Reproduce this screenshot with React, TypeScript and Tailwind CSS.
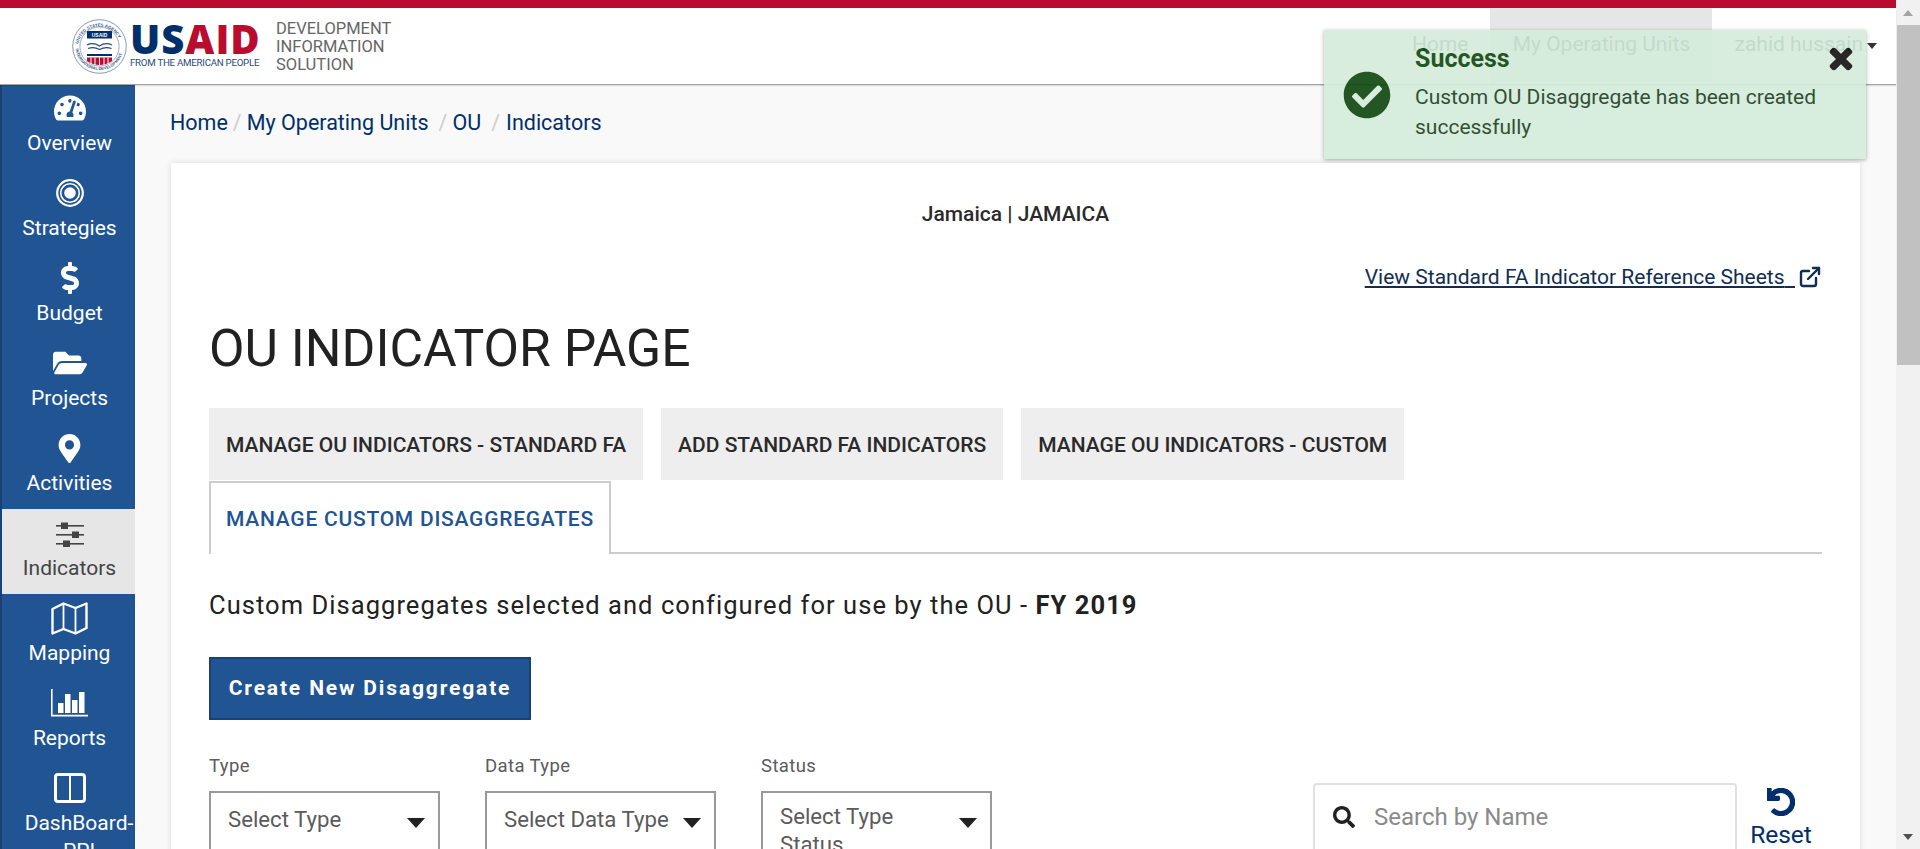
import { FaTachometerAlt, FaDollarSign, FaFolderOpen, FaMapMarkerAlt, FaCheckCircle, FaTimes, FaSearch, FaUndo } from "react-icons/fa";
import { FiExternalLink } from "react-icons/fi";
import type { ReactNode } from "react";

function TargetIcon() {
  return (
    <svg width="28" height="28" viewBox="0 0 28 28" fill="none" stroke="currentColor">
      <circle cx="14" cy="14" r="12.8" strokeWidth="2.2" />
      <circle cx="14" cy="14" r="9.3" strokeWidth="1.6" />
      <circle cx="14" cy="14" r="5.8" fill="currentColor" stroke="none" />
    </svg>
  );
}

function SlidersIcon() {
  return (
    <svg width="28" height="26" viewBox="0 0 28 26" fill="#444" className="mt-[3px]">
      <rect x="0" y="3" width="28" height="1.6" />
      <rect x="0" y="12" width="28" height="1.6" />
      <rect x="0" y="21" width="28" height="1.6" />
      <rect x="5" y="0.5" width="7" height="6.5" />
      <rect x="16" y="9.5" width="7" height="6.5" />
      <rect x="7" y="18.5" width="7" height="6.5" />
    </svg>
  );
}

function MapIcon() {
  return (
    <svg width="37" height="33" viewBox="0 0 37 33" fill="none" stroke="currentColor" strokeWidth="2.4">
      <path d="M1.5 7 12.5 1.500 24.500 6 35.500 1.500V26L24.500 31.500 12.500 27 1.500 31.500Z" strokeLinejoin="round" />
      <path d="M12.500 1.500V27M24.500 6V31.500" strokeWidth="1.800" />
    </svg>
  );
}

function BarsIcon() {
  return (
    <svg width="37" height="28" viewBox="0 0 37 28" fill="currentColor">
      <path d="M0 0H1.600V25.800H37V27.500H0Z" />
      <rect x="7" y="14" width="5.500" height="10" />
      <rect x="14" y="5" width="5.500" height="19" />
      <rect x="21" y="11" width="5.500" height="13" />
      <rect x="28" y="3" width="5.500" height="21" />
    </svg>
  );
}

function ColumnsIcon() {
  return (
    <svg width="32" height="30" viewBox="0 0 32 30" fill="none" stroke="currentColor" strokeWidth="3">
      <rect x="1.500" y="1.500" width="29" height="27" rx="2.500" />
      <path d="M16 2V28" strokeWidth="2" />
    </svg>
  );
}

function Seal() {
  return (
    <svg width="55" height="55" viewBox="0 0 55 55" className="shrink-0">
      <defs>
        <path id="sealTop" d="M6 29a21.500 21.500 0 0 1 43 0" />
        <path id="sealBottom" d="M3.500 27a24 24 0 0 0 48 0" />
      </defs>
      <circle cx="27.500" cy="27.500" r="26.800" fill="#fff" stroke="#7a8ba6" strokeWidth="0.900" />
      <circle cx="27.500" cy="27.500" r="19.600" fill="#fff" stroke="#5d7190" strokeWidth="0.600" />
      <text fontSize="4.300" fill="#3a5580" fontFamily="Liberation Sans, sans-serif" fontWeight="700">
        <textPath href="#sealTop" startOffset="4">UNITED STATES AGENCY</textPath>
      </text>
      <text fontSize="4" fill="#3a5580" fontFamily="Liberation Sans, sans-serif" fontWeight="700">
        <textPath href="#sealBottom" startOffset="3">INTERNATIONAL DEVELOPMENT</textPath>
      </text>
      <rect x="15" y="12" width="25" height="7.500" fill="#002f6c" />
      <text x="27.500" y="17.800" fontSize="5" fill="#fff" textAnchor="middle" fontFamily="Liberation Sans, sans-serif" fontWeight="700">USAID</text>
      <path d="M15 26q6-3 12.500 1 6-4 12.500-1M16 29.500q6-2 11.500 1 6-3 12-1" fill="none" stroke="#2b4a78" strokeWidth="1.300" />
      <rect x="15" y="35" width="25" height="2" fill="#002f6c" />
      <path d="M15 38.500H40V42Q34 46 27.500 46T15 42Z" fill="#ba0c2f" />
      <path d="M19 38.500V45M23 38.500V46M27.500 38.500V46M32 38.500V46M36 38.500V45" stroke="#fff" strokeWidth="1" />
    </svg>
  );
}

function Logo() {
  return (
    <div className="ml-[72px] flex items-center">
      <Seal />
      <div className="ml-[3px] flex w-[130px] flex-col">
        <div className="font-['Open_Sans'] text-[40px] leading-[30px] font-extrabold tracking-[1px] whitespace-nowrap text-[#002f6c]">
          US<span className="text-[#ba0c2f]">AID</span>
        </div>
        <div className="mt-[3px] text-[9.700px] leading-[11px] font-normal tracking-[-0.250px] whitespace-nowrap text-[#2b4a78]">
          FROM THE AMERICAN PEOPLE
        </div>
      </div>
      <div className="mt-[2px] ml-[16px] text-[16.500px] leading-[18px] text-[#666]">
        <div>DEVELOPMENT</div>
        <div>INFORMATION</div>
        <div>SOLUTION</div>
      </div>
    </div>
  );
}

function Header() {
  return (
    <header className="relative z-10 flex h-[76px] shrink-0 items-stretch bg-white shadow-[0_1px_0_#a8a8a8,0_2px_1px_rgba(0,0,0,0.12)]">
      <Logo />
      <nav className="ml-auto flex items-stretch pr-[19px] text-[21px] text-[#333]">
        <div className="flex items-center px-[22px] pb-[2px]">Home</div>
        <div className="flex w-[222px] items-center justify-center bg-[#e6e6e6] pb-[2px]">My Operating Units</div>
        <div className="flex items-center pl-[22px] pb-[2px]">
          zahid hussain
          <span className="mt-[1px] ml-[4px] border-x-[5px] border-t-[6px] border-x-transparent border-t-[#333]" />
        </div>
      </nav>
    </header>
  );
}

function SideItem({ icon, label, active, labelClass }: { icon: ReactNode; label: string; active?: boolean; labelClass?: string }) {
  return (
    <div
      className={`mr-[-2px] flex h-[85px] shrink-0 flex-col items-center pt-[10px] text-[21px] leading-[28px] ${
        active ? "bg-[#e6e6e6] text-[#444]" : "text-white"
      }`}
    >
      <div className="flex h-[28px] items-center justify-center">{icon}</div>
      <div className={`mt-[7px] max-w-[122px] text-center ${labelClass ?? ""}`}>{label}</div>
    </div>
  );
}

function Sidebar() {
  return (
    <aside className="flex w-[135px] shrink-0 flex-col border-l-2 border-[#1a4173] bg-[#205493]">
      <SideItem icon={<FaTachometerAlt size={32} />} label="Overview" />
      <SideItem icon={<TargetIcon />} label="Strategies" />
      <SideItem icon={<FaDollarSign size={32} />} label="Budget" />
      <SideItem icon={<FaFolderOpen size={34} />} label="Projects" />
      <SideItem icon={<FaMapMarkerAlt size={29} />} label="Activities" />
      <SideItem icon={<SlidersIcon />} label="Indicators" active />
      <SideItem icon={<MapIcon />} label="Mapping" />
      <SideItem icon={<BarsIcon />} label="Reports" />
      <SideItem icon={<ColumnsIcon />} label="DashBoard-PPI" labelClass="ml-[19px]" />
    </aside>
  );
}

function Breadcrumb() {
  return (
    <div className="flex h-[79px] shrink-0 items-center pl-[35px] text-[21.500px] text-[#002f6c]">
      <span>Home</span>
      <span className="mx-[5px] text-[#ccc]">/</span>
      <span>My Operating Units</span>
      <span className="mr-[5px] ml-[10px] text-[#ccc]">/</span>
      <span>OU</span>
      <span className="mr-[6px] ml-[10px] text-[#ccc]">/</span>
      <span>Indicators</span>
    </div>
  );
}

function Tab({ children }: { children: ReactNode }) {
  return <div className="flex h-[72px] items-center bg-[#eee] px-[17px] pt-[4px] text-[21px] font-medium text-[#2a2a2a]">{children}</div>;
}

function SelectBox({ label, value, textClass }: { label: string; value: string; textClass: string }) {
  return (
    <div className="w-[231px]">
      <div className="text-[18.500px] leading-[24px] tracking-[0.400px] text-[#5b5b5b]">{label}</div>
      <div className="mt-[13px] flex h-[80px] items-start justify-between border-2 border-[#999] pr-[13px] pl-[17px] text-[22.200px] leading-[28px] text-[#5b5b5b]">
        <span className={textClass}>{value}</span>
        <span className="mt-[25px] border-x-[9px] border-t-[10px] border-x-transparent border-t-[#212121]" />
      </div>
    </div>
  );
}

function Card() {
  return (
    <section className="mx-[36px] flex-1 shrink-0 bg-white px-[38px] shadow-[0_0_6px_rgba(0,0,0,0.12)]">
      <div className="pt-[38px] text-center text-[21px] leading-[26px] font-medium text-[#2a2a2a]">Jamaica | JAMAICA</div>
      <div className="mt-[37px] flex items-center justify-end text-[21px] leading-[26px] text-[#112e51]">
        <span className="underline">View Standard FA Indicator Reference Sheets</span>
        <span className="underline">&nbsp;&nbsp;</span>
        <FiExternalLink size={24} strokeWidth={2.4} className="ml-[3px]" />
      </div>
      <h1 className="mt-[27px] text-[51.600px] leading-[64px] font-normal text-[#212121]">OU INDICATOR PAGE</h1>
      <div className="mt-[27px] flex gap-[18px]">
        <Tab>MANAGE OU INDICATORS - STANDARD FA</Tab>
        <Tab>ADD STANDARD FA INDICATORS</Tab>
        <Tab>MANAGE OU INDICATORS - CUSTOM</Tab>
      </div>
      <div className="mt-[1px] flex border-b-2 border-[#ccc]">
        <div className="mb-[-2px] flex h-[73px] items-center border-x-2 border-t-2 border-[#ccc] bg-white px-[15px] pt-[2px] text-[21px] font-medium tracking-[0.750px] text-[#205493]">
          MANAGE CUSTOM DISAGGREGATES
        </div>
      </div>
      <p className="mt-[35px] text-[25.500px] leading-[32px] tracking-[1.050px] text-[#212121]">
        Custom Disaggregates selected and configured for use by the OU - <b>FY 2019</b>
      </p>
      <div className="mt-[36px] flex h-[63px] w-[322px] items-center justify-center border-2 border-[#1a4173] bg-[#205493] text-[21px] font-bold tracking-[1.850px] text-white">
        Create New Disaggregate
      </div>
      <div className="mt-[34px] flex items-start">
        <div className="flex gap-[45px]">
          <SelectBox label="Type" value="Select Type" textClass="mt-[12px] w-[175px]" />
          <SelectBox label="Data Type" value="Select Data Type" textClass="mt-[12px] w-[175px]" />
          <SelectBox label="Status" value="Select Type Status" textClass="mt-[9px] w-[150px]" />
        </div>
        <div className="mt-[29px] ml-auto flex">
          <div className="flex h-[70px] w-[424px] items-center rounded border-2 border-[#e0e0e0] pb-[2px] pl-[18px]">
            <FaSearch size={22} className="shrink-0 text-[#212121]" />
            <input placeholder="Search by Name" className="ml-[19px] w-[340px] text-[24px] outline-none placeholder:text-[#8a8a8a]" />
          </div>
          <div className="mr-[4px] ml-[7px] flex w-[74px] flex-col items-center pt-[5px] text-[24.500px] leading-[28px] text-[#002f6c]">
            <FaUndo size={28} stroke="currentColor" strokeWidth={24} />
            <div className="mt-[5px]">Reset</div>
          </div>
        </div>
      </div>
    </section>
  );
}

function Toast() {
  return (
    <div className="absolute top-[30px] left-[1324px] z-20 flex h-[129px] w-[542px] bg-[#d4ecda] opacity-90 shadow-[0_1px_4px_rgba(0,0,0,0.35)]">
      <div className="flex w-[91px] shrink-0 items-center pl-[19px] text-[#0c450c]">
        <FaCheckCircle size={48} />
      </div>
      <div className="flex-1 pt-[12px] pr-[30px]">
        <div className="text-[25px] leading-[34px] font-bold text-[#0c450c]">Success</div>
        <div className="mt-[6px] text-[21px] leading-[30px] text-[#1b3d22]">Custom OU Disaggregate has been created successfully</div>
      </div>
      <FaTimes size={30} stroke="currentColor" strokeWidth={30} className="absolute top-[14px] right-[10px] text-[#111]" />
    </div>
  );
}

function Scrollbar() {
  return (
    <div className="flex w-[24px] shrink-0 flex-col items-center justify-between bg-[#f1f1f1]">
      <div className="flex h-[25px] w-full items-center justify-center">
        <span className="border-x-[5px] border-b-[6px] border-x-transparent border-b-[#a3a3a3]" />
      </div>
      <div className="mb-auto h-[340px] w-[23px] self-end bg-[#c1c1c1]" />
      <div className="flex h-[25px] w-full items-center justify-center">
        <span className="border-x-[5px] border-t-[6px] border-x-transparent border-t-[#505050]" />
      </div>
    </div>
  );
}

export default function App() {
  return (
    <div className="relative flex h-[849px] w-[1920px] overflow-hidden font-['Roboto',sans-serif]">
      <div className="flex min-w-0 flex-1 flex-col">
        <div className="h-2 shrink-0 bg-[#ba0c2f]" />
        <Header />
        <div className="flex min-h-0 flex-1">
          <Sidebar />
          <main className="flex min-w-0 flex-1 flex-col bg-[#f9f9f9]">
            <Breadcrumb />
            <Card />
          </main>
        </div>
      </div>
      <Scrollbar />
      <Toast />
    </div>
  );
}
